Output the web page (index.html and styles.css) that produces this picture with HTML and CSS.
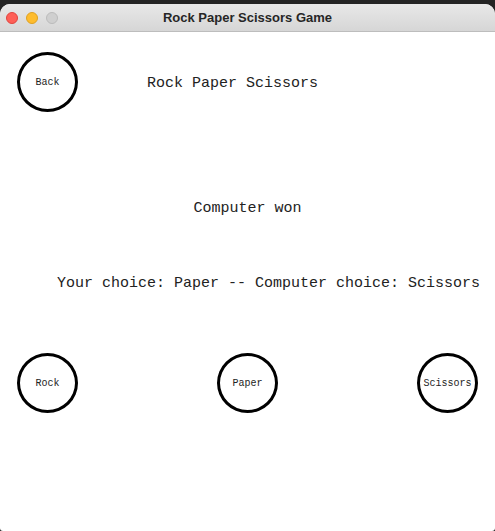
FILE: index.html
```html
<!DOCTYPE html>
<html>
<head>
<meta charset="utf-8">
<title>Rock Paper Scissors Game</title>
<link rel="stylesheet" href="styles.css">
</head>
<body>
<div class="window">
  <div class="titlebar">
    <div class="lights">
      <span class="light red"></span>
      <span class="light yellow"></span>
      <span class="light gray"></span>
    </div>
    <div class="wintitle">Rock Paper Scissors Game</div>
    <div></div>
  </div>
  <div class="content">
    <div class="row-top">
      <div class="circle">Back</div>
      <div class="heading">Rock Paper Scissors</div>
    </div>
    <div class="result">Computer won</div>
    <div class="choices">Your choice: Paper -- Computer choice: Scissors</div>
    <div class="buttons">
      <div class="circle">Rock</div>
      <div class="circle">Paper</div>
      <div class="circle">Scissors</div>
    </div>
  </div>
</div>
</body>
</html>
```
FILE: styles.css
```css
html, body {
  margin: 0;
  padding: 0;
}
body {
  background: #242424;
  width: 495px;
  height: 531px;
  overflow: hidden;
}
.window {
  margin-top: 4px;
  height: 527px;
  background: #ffffff;
  border-radius: 10px 10px 3px 3px;
  overflow: hidden;
}
.titlebar {
  height: 27px;
  border-bottom: 1px solid #bdbdbd;
  background: linear-gradient(#e8e8e8, #d6d6d6);
  display: grid;
  grid-template-columns: 1fr auto 1fr;
  align-items: center;
}
.lights {
  display: flex;
  gap: 8px;
  padding-left: 6px;
  padding-top: 1px;
}
.light {
  width: 12px;
  height: 12px;
  border-radius: 50%;
  box-sizing: border-box;
}
.red { background: #fe5f57; border: 1px solid #e0443e; }
.yellow { background: #febc2e; border: 1px solid #dea123; }
.gray { background: #cfcfcf; border: 1px solid #bbbbbb; }
.wintitle {
  font-family: "Liberation Sans", Arial, sans-serif;
  font-weight: bold;
  font-size: 13px;
  color: #262626;
}
.content {
  font-family: "Liberation Mono", "Courier New", monospace;
  color: #222;
}
.row-top {
  display: flex;
  align-items: center;
  margin-top: 20px;
  padding-left: 17px;
}
.circle {
  width: 61px;
  height: 60px;
  box-sizing: border-box;
  border: 3px solid #000;
  border-radius: 50%;
  display: flex;
  align-items: center;
  justify-content: center;
  font-size: 10px;
  line-height: 12px;
  padding-top: 2px;
}
.heading {
  margin-left: 69px;
  font-size: 15px;
  line-height: 20px;
  padding-top: 3px;
}
.result {
  margin-top: 87px;
  text-align: center;
  font-size: 15px;
  line-height: 20px;
}
.choices {
  margin-top: 55px;
  padding-left: 57px;
  font-size: 15px;
  line-height: 20px;
  white-space: nowrap;
}
.buttons {
  display: flex;
  gap: 139px;
  margin-top: 59px;
  padding-left: 17px;
}
```
